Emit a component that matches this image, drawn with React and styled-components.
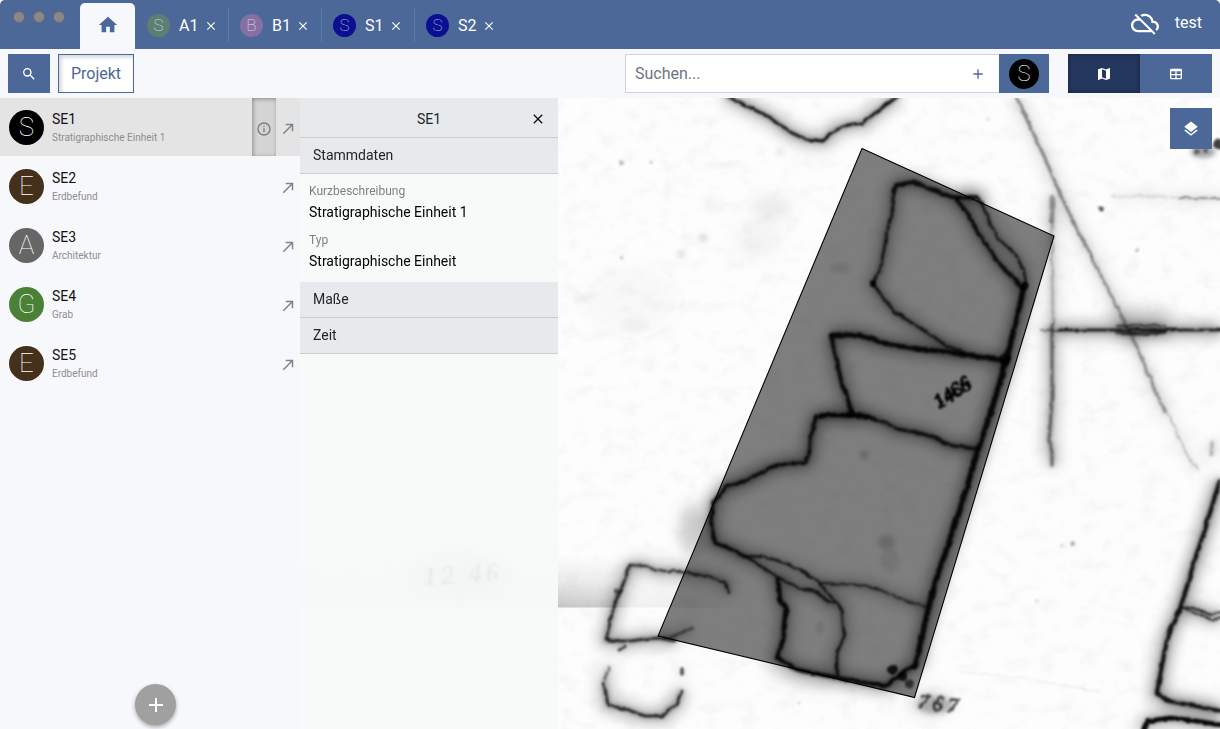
import React from "react";
import styled, { createGlobalStyle } from "styled-components";

const BLUE = "#4b6898";

const GlobalStyle = createGlobalStyle`
  *, *::before, *::after { box-sizing: border-box; }
  html, body, #root { height: 100%; }
  body {
    margin: 0;
    background: #f7f8fb;
    font-family: Roboto, "Liberation Sans", sans-serif;
    color: #212529;
    overflow: hidden;
  }
  button { font: inherit; border: 0; padding: 0; margin: 0; background: none; color: inherit; }
`;

const icons = {
  home: "M10,20V14H14V20H19V12H22L12,3L2,12H5V20H10Z",
  magnify:
    "M9.5,3A6.5,6.5 0 0,1 16,9.5C16,11.11 15.41,12.59 14.44,13.73L14.71,14H15.5L20.5,19L19,20.5L14,15.5V14.71L13.73,14.44C12.59,15.41 11.11,16 9.5,16A6.5,6.5 0 0,1 3,9.5A6.5,6.5 0 0,1 9.5,3M9.5,5C7,5 5,7 5,9.5C5,12 7,14 9.5,14C12,14 14,12 14,9.5C14,7 12,5 9.5,5Z",
  map: "M15,19L9,16.89V5L15,7.11M20.5,3C20.44,3 20.39,3 20.34,3L15,5.1L9,3L3.36,4.9C3.15,4.97 3,5.15 3,5.38V20.5A0.5,0.5 0 0,0 3.5,21C3.55,21 3.61,21 3.66,20.97L9,18.9L15,21L20.64,19.1C20.85,19 21,18.85 21,18.62V3.5A0.5,0.5 0 0,0 20.5,3Z",
  table:
    "M5,4H19A2,2 0 0,1 21,6V18A2,2 0 0,1 19,20H5A2,2 0 0,1 3,18V6A2,2 0 0,1 5,4M5,8V12H11V8H5M13,8V12H19V8H13M5,14V18H11V14H5M13,14V18H19V14H13Z",
  layers:
    "M12,16L19.36,10.27L21,9L12,2L3,9L4.63,10.27M12,18.54L4.62,12.81L3,14.07L12,21.07L21,14.07L19.37,12.8L12,18.54Z",
  plus: "M19,13H13V19H11V13H5V11H11V5H13V11H19V13Z",
  close:
    "M19,6.41L17.59,5L12,10.59L6.41,5L5,6.41L10.59,12L5,17.59L6.41,19L12,13.41L17.59,19L19,17.59L13.41,12L19,6.41Z",
  info: "M11,9H13V7H11M12,20C7.59,20 4,16.41 4,12C4,7.59 7.59,4 12,4C16.41,4 20,7.59 20,12C20,16.41 16.41,20 12,20M12,2A10,10 0 0,0 2,12A10,10 0 0,0 12,22A10,10 0 0,0 22,12A10,10 0 0,0 12,2M11,17H13V11H11V17Z",
  arrow: "M5,17.59L15.59,7H9V5H19V15H17V8.41L6.41,19L5,17.59Z",
  cloudOff:
    "M19.35 10.04A7.49 7.49 0 0 0 12 4c-1.48 0-2.85.43-4.01 1.17l1.46 1.46A5.497 5.497 0 0 1 17.5 11.5v.5H19a2.996 2.996 0 0 1 1.79 5.4l1.41 1.41C23.16 17.97 24 16.68 24 15c0-2.64-2.05-4.78-4.65-4.96zM3 5.27l2.75 2.74C2.56 8.15 0 10.77 0 14c0 3.31 2.69 6 6 6h11.73l2 2L21 20.73 4.27 4 3 5.27zM7.73 10l8 8H6c-2.21 0-4-1.79-4-4s1.79-4 4-4h1.73z",
};

const Glyph = styled.svg`
  display: block;
  flex: none;
  fill: currentColor;
`;
const Icon = ({ name, size }) => (
  <Glyph width={size} height={size} viewBox="0 0 24 24">
    <path d={icons[name]} />
  </Glyph>
);

const Window = styled.div`
  width: 1220px;
  height: 729px;
  display: flex;
  flex-direction: column;
`;

const TitleBar = styled.header`
  height: 49px;
  flex: none;
  display: flex;
  align-items: flex-start;
  background: ${BLUE};
  border-top-left-radius: 5px;
  border-top-right-radius: 5px;
  color: #fff;
`;
const WindowControls = styled.div`
  width: 80px;
  display: flex;
  gap: 8px;
  padding: 11px 0 0 13px;
`;
const ControlDot = styled.span`
  width: 12px;
  height: 12px;
  border-radius: 50%;
  background: #8a8889;
  border: 1px solid #6a6a6f;
`;
const HomeTab = styled.div`
  width: 55px;
  height: 46px;
  margin-top: 3px;
  border-radius: 5px 5px 0 0;
  background: #f7f8fb;
  color: ${BLUE};
  display: flex;
  justify-content: center;
  padding: 11px 0 0 0;
`;
const Tab = styled.div`
  width: 93px;
  height: 34px;
  margin-top: 8px;
  padding-left: ${(p) => (p.$first ? 12 : 11)}px;
  ${(p) => p.$first && "width: 94px;"}
  border-right: 1px solid ${(p) => (p.$last ? "transparent" : "#5f7bab")};
  display: flex;
  align-items: center;
  font-size: 16px;
`;
const TabLabel = styled.span`
  margin: 0 5.5px 0 9px;
  padding-top: 2px;
  line-height: 24px;
`;
const TabClose = styled.span`
  padding-top: 2px;
`;
const Account = styled.div`
  margin-left: auto;
  display: flex;
  align-items: center;
  gap: 16px;
  padding: 9px 18px 0 0;
  font-size: 16px;
  line-height: 24px;
`;

const Avatar = styled.span`
  flex: none;
  width: ${(p) => p.$size}px;
  height: ${(p) => p.$size}px;
  border-radius: 50%;
  background: ${(p) => p.$color};
  color: ${(p) => p.$ink || "#fff"};
  display: flex;
  align-items: center;
  justify-content: center;
  font-weight: 100;
  font-size: ${(p) => p.$font}px;
  line-height: 1;
`;

const Toolbar = styled.div`
  height: 49px;
  flex: none;
  display: flex;
  align-items: center;
  padding: 0 8px;
`;
const ToolButton = styled.button`
  width: ${(p) => p.$width}px;
  height: 39px;
  display: flex;
  align-items: center;
  justify-content: center;
  color: #fff;
  background: ${(p) => (p.$active ? "#25375f" : BLUE)};
  ${(p) => p.$active && "box-shadow: inset 0 0 5px rgba(0, 0, 0, 0.35);"}
`;
const ProjectButton = styled.button`
  width: 76px;
  height: 39px;
  margin-left: 8px;
  border: 1px solid ${BLUE};
  background: #fff;
  color: ${BLUE};
  font-size: 16px;
  box-shadow: inset 2px 2px 4px rgba(0, 0, 0, 0.18);
`;
const SearchBox = styled.div`
  width: 374px;
  height: 39px;
  margin-left: auto;
  padding: 0 13px 0 9px;
  border: 1px solid #ced4da;
  border-right: 0;
  background: #fff;
  color: #6c757d;
  font-size: 16px;
  display: flex;
  align-items: center;
  justify-content: space-between;
`;
const AddFilter = styled.span`
  color: ${BLUE};
`;
const ViewSwitch = styled.div`
  display: flex;
  margin-left: 19px;
`;

const Body = styled.main`
  flex: 1;
  min-height: 0;
  display: flex;
`;
const Sidebar = styled.aside`
  width: 300px;
  display: flex;
  flex-direction: column;
  align-items: center;
  justify-content: space-between;
  padding-bottom: 4px;
`;
const ResourceList = styled.div`
  width: 100%;
  display: flex;
  flex-direction: column;
  gap: 1px;
`;
const ResourceRow = styled.div`
  height: 58px;
  padding-left: 9px;
  display: flex;
  align-items: center;
  background: ${(p) => (p.$selected ? "#e4e4e4" : "transparent")};
`;
const ResourceText = styled.div`
  flex: 1;
  margin-left: 8px;
`;
const ResourceName = styled.div`
  font-size: 14px;
  line-height: 18px;
  color: #111;
`;
const ResourceDescription = styled.div`
  margin-top: 2px;
  font-size: 10px;
  line-height: 15px;
  color: #8e8e8e;
`;
const InfoButton = styled.button`
  width: 24px;
  height: 58px;
  padding-top: 4px;
  display: flex;
  align-items: center;
  justify-content: center;
  color: #75797d;
  background: #d4d4d4;
  box-shadow: inset 1px 1px 4px rgba(0, 0, 0, 0.35);
`;
const OpenButton = styled.button`
  width: 24px;
  padding-top: 4px;
  display: flex;
  justify-content: center;
  color: #7c858d;
`;
const CreateButton = styled.button`
  width: 41px;
  height: 41px;
  margin-left: 11px;
  border-radius: 50%;
  background: #a0a0a0;
  color: #fff;
  display: flex;
  align-items: center;
  justify-content: center;
  box-shadow: 0 2px 4px rgba(0, 0, 0, 0.35);
`;

const MapArea = styled.section`
  position: relative;
  width: 920px;
  display: flex;
  justify-content: space-between;
  align-items: flex-start;
  background: #fdfdfd;
`;
const MapDrawing = styled.svg`
  position: absolute;
  inset: 0;
  width: 920px;
  height: 631px;
`;
const DetailPanel = styled.div`
  position: relative;
  width: 258px;
  height: 631px;
  background: rgba(247, 250, 249, 0.9);
`;
const DetailHeader = styled.div`
  height: 40px;
  display: flex;
  align-items: center;
  padding-top: 3px;
  background: #e6eaed;
  border-bottom: 1px solid #c9ced2;
  font-size: 14px;
`;
const DetailTitle = styled.span`
  flex: 1;
  padding-left: 41px;
  text-align: center;
`;
const DetailClose = styled.button`
  width: 41px;
  display: flex;
  justify-content: center;
  color: #111;
`;
const SectionHeader = styled.div`
  height: 36px;
  padding: 0 13px;
  background: #e6eaed;
  border-bottom: 1px solid #c9ced2;
  font-size: 14px;
  line-height: 35px;
`;
const Fields = styled.dl`
  margin: 0;
  height: 108px;
  padding: 8px 9px 0;
`;
const FieldName = styled.dt`
  font-size: 12px;
  line-height: 18px;
  color: #808080;
`;
const FieldValue = styled.dd`
  margin: 0 0 8px;
  padding-top: 2px;
  font-size: 14px;
  line-height: 21px;
  color: #000;
`;
const LayerButton = styled(ToolButton)`
  position: relative;
  width: 42px;
  height: 41px;
  margin: 10px 8px 0 0;
`;

const tabs = [
  { letter: "S", name: "A1", color: "#5b8073", ink: "#dde8e4" },
  { letter: "B", name: "B1", color: "#8670a3", ink: "#e2d8ee" },
  { letter: "S", name: "S1", color: "#0a108f", ink: "#c6c9f0" },
  { letter: "S", name: "S2", color: "#0a108f", ink: "#c6c9f0" },
];
const resources = [
  { letter: "S", name: "SE1", description: "Stratigraphische Einheit 1", color: "#000" },
  { letter: "E", name: "SE2", description: "Erdbefund", color: "#45301b" },
  { letter: "A", name: "SE3", description: "Architektur", color: "#666" },
  { letter: "G", name: "SE4", description: "Grab", color: "#4b8136" },
  { letter: "E", name: "SE5", description: "Erdbefund", color: "#45301b" },
];

/* Pencil lines of the scanned plan: points, line width, darkness, halo strength */
const strokes = [
  ["725,95 745,105 771,118 788,131 805,139 823,141 835,130 848,125 863,123 875,113 898,96", 2.9, 0.85, 0.34],
  ["893,192 897,185 913,182 933,190 952,197 977,198 982,204", 3.6, 0.85, 0.42],
  ["893,192 892,215 887,231 884,250 880,270 873,283 883,298 895,312 923,330 947,346 965,353", 2.4, 0.8, 0.34],
  ["957,200 968,214 977,231 997,261 1010,275 1022,288", 3.5, 0.85, 0.4],
  ["982,204 990,224 1000,240 1017,256 1024,272 1026,283", 2.2, 0.8, 0.25],
  ["1024,285 1020,305 1015,325 1007,358 990,415 978,450 961,507 936,580 928,610 915,667", 5, 0.88, 0.52],
  ["831,335 858,335 891,345 920,349 947,352 973,356 1007,361", 4.4, 0.88, 0.48],
  ["831,336 836,357 841,381 847,397 852,413", 4, 0.85, 0.4],
  ["815,417 834,415 848,416 862,415 876,419 898,429 920,433 935,438 948,445 977,449", 2.9, 0.82, 0.44],
  ["816,417 811,437 810,449 806,462 790,463 772,467 745,481 726,487 713,503 711,523 715,543 731,549 745,557", 3, 0.88, 0.48],
  ["822,415 850,415 869,417", 4, 0.8, 0.2],
  ["745,556 771,573 798,588 818,592 828,602 837,603 842,610 844,637 837,653 837,675", 2.5, 0.8, 0.28],
  ["745,556 765,557 785,563 818,580 825,590 837,603", 2.4, 0.8, 0.2],
  ["822,583 858,585 880,590 898,598 927,607", 1.8, 0.65, 0.24],
  ["778,577 780,600 786,608 784,625 783,640 777,658 798,670 838,678 862,682 885,686 896,678 904,672 914,666", 4, 0.88, 0.44],
  ["630,565 645,566 658,571 672,571 688,573 708,576 725,582 729,593", 2.2, 0.75, 0.3],
  ["630,565 624,582 618,595 612,614 606,640 620,641 631,641 645,639 658,638 675,641", 2.4, 0.8, 0.34],
  ["670,637 681,633 693,628", 2.2, 0.5, 0.15],
  ["624,647 619,650", 3, 0.65, 0.15],
  ["609,667 604,683", 2, 0.45, 0.2],
  ["604,683 608,705 625,709 645,716 663,716 669,709 676,705 682,690", 2.5, 0.8, 0.34],
  ["682,669 682,674", 3.5, 0.65, 0.15],
  ["1220,480 1206,526 1193,566 1180,609 1168,635 1163,660 1157,693 1168,701 1190,705 1221,711", 3.8, 0.85, 0.46],
  ["1180,608 1195,608 1208,614 1221,613", 2, 0.75, 0.2],
  ["1186,610 1199,614 1212,620 1221,618", 2, 0.75, 0.2],
  ["1143,731 1148,721 1170,718 1190,720 1221,725", 4.5, 0.95, 0.35],
  ["1058,330 1117,330 1166,330 1221,330", 2.6, 0.82, 0.38],
  ["1042,330 1058,330", 2, 0.4, 0.15],
  ["1117,326 1140,325 1165,326", 2.2, 0.6, 0.2],
  ["1117,333 1140,334 1165,332", 3, 0.65, 0.25],
  ["1052,197 1052,222", 4.5, 0.28, 0.2],
  ["1052,222 1052,270 1053,325", 2, 0.22, 0.14],
  ["1052,325 1052,400 1050,430 1049,440 1052,452 1052,466", 3, 0.42, 0.28],
  ["1016,96 1030,126 1045,158 1061,196 1080,235 1092,257", 3, 0.38, 0.12],
  ["1092,257 1108,289 1125,323 1137,348 1165,412", 2.8, 0.32, 0.12],
  ["1165,408 1176,430 1187,455 1198,470", 2, 0.18, 0.05],
  ["1112,196 1160,196 1180,198", 1.2, 0.18, 0.04],
  ["1180,198 1221,198", 1.8, 0.38, 0.08],
  ["961,672 1020,678 1100,692", 1.2, 0.08, 0],
  ["1212,442 1212,455", 3, 0.2, 0.12],
];
const spots = [
  [893, 670, 5, 0.85], [903, 676, 4, 0.8], [909, 684, 5, 0.6], [1101, 209, 2.8, 0.6], [1137, 250, 2.2, 0.22],
  [1073, 544, 2.4, 0.32], [1062, 545, 2, 0.12], [622, 163, 2.3, 0.22], [651, 162, 2, 0.16],
  [621, 258, 2.2, 0.22], [1037, 601, 2.2, 0.1], [988, 119, 2.2, 0.08], [800, 703, 2, 0.1],
  [1218, 144, 5, 0.75], [1197, 152, 3, 0.4], [1205, 150, 3, 0.4],
  [1025, 286, 4, 0.8], [1005, 359, 6, 0.85], [873, 283, 3, 0.85], [850, 413, 4, 0.8],
  [617, 591, 3, 0.5],
];
const smudges = [
  [864, 455, 4, 5, 0.17], [886, 542, 9, 7, 0.15], [820, 628, 2, 7, 0.18], [703, 238, 5, 4, 0.13],
  [681, 254, 5, 4, 0.1], [715, 205, 12, 9, 0.02], [1203, 152, 12, 6, 0.35], [780, 152, 4, 4, 0.08],
  [635, 325, 14, 8, 0.03], [580, 299, 8, 4, 0.05], [722, 165, 18, 2, 0.06], [840, 268, 10, 5, 0.09],
  [890, 560, 10, 12, 0.07], [935, 705, 18, 9, 0.22], [668, 187, 3, 10, 0.03],
];

const ScannedMap = () => (
  <MapDrawing viewBox="300 98 920 631">
    <defs>
      <filter id="rough" filterUnits="userSpaceOnUse" x="300" y="90" width="930" height="650">
        <feTurbulence type="fractalNoise" baseFrequency="0.12" numOctaves="2" seed="4" />
        <feDisplacementMap in="SourceGraphic" scale="4" xChannelSelector="R" yChannelSelector="G" />
        <feGaussianBlur stdDeviation="0.9" />
      </filter>
      <filter id="halo" filterUnits="userSpaceOnUse" x="300" y="90" width="930" height="650">
        <feGaussianBlur stdDeviation="7" />
      </filter>
      <filter id="near" filterUnits="userSpaceOnUse" x="300" y="90" width="930" height="650">
        <feGaussianBlur stdDeviation="2.8" />
      </filter>
      <filter id="grain" filterUnits="userSpaceOnUse" x="300" y="98" width="920" height="631">
        <feTurbulence type="fractalNoise" baseFrequency="0.05 0.07" numOctaves="4" seed="9" />
        <feColorMatrix values="0 0 0 0 0.3  0 0 0 0 0.3  0 0 0 0 0.3  1.1 0 0 0 -0.55" />
      </filter>
      <linearGradient id="fold" x1="0" y1="0" x2="0" y2="1">
        <stop offset="0" stopColor="#777" stopOpacity="0" />
        <stop offset="0.5" stopColor="#777" stopOpacity="0.14" />
        <stop offset="1" stopColor="#777" stopOpacity="0.42" />
      </linearGradient>
      <linearGradient id="panelFold" x1="0" y1="0" x2="0" y2="1">
        <stop offset="0" stopColor="#888" stopOpacity="0" />
        <stop offset="1" stopColor="#888" stopOpacity="0.15" />
      </linearGradient>
      <linearGradient id="foldEnd" x1="0" y1="0" x2="1" y2="0">
        <stop offset="0" stopColor="#fff" stopOpacity="1" />
        <stop offset="0.28" stopColor="#fff" stopOpacity="0.8" />
        <stop offset="0.4" stopColor="#fff" stopOpacity="0.2" />
        <stop offset="0.75" stopColor="#fff" stopOpacity="0.3" />
        <stop offset="1" stopColor="#fff" stopOpacity="0" />
      </linearGradient>
      <mask id="foldMask">
        <rect x="558" y="550" width="182" height="60" fill="url(#foldEnd)" />
      </mask>
    </defs>
    <rect x="300" y="98" width="920" height="631" fill="#fdfdfd" />
    <rect x="300" y="98" width="920" height="631" filter="url(#grain)" opacity="0.17" />
    <g filter="url(#halo)" fill="#777">
      <ellipse cx="772" cy="208" rx="20" ry="13" opacity="0.12" />
      <ellipse cx="758" cy="240" rx="25" ry="17" opacity="0.07" />
      <ellipse cx="630" cy="300" rx="45" ry="34" opacity="0.04" />
      <ellipse cx="1140" cy="315" rx="36" ry="9" opacity="0.26" />
      <ellipse cx="692" cy="530" rx="12" ry="26" opacity="0.36" />
      <ellipse cx="460" cy="575" rx="50" ry="24" opacity="0.25" />
      <ellipse cx="930" cy="703" rx="22" ry="12" opacity="0.25" />
      <ellipse cx="972" cy="195" rx="14" ry="6" opacity="0.4" />
      <ellipse cx="800" cy="680" rx="34" ry="6" opacity="0.2" transform="rotate(13 800 680)" />
    </g>
    <g filter="url(#near)">
      {smudges.map(([x, y, rx, ry, dark]) => (
        <ellipse key={`${x}-${y}`} cx={x} cy={y} rx={rx} ry={ry} fillOpacity={dark} />
      ))}
    </g>
    <rect x="558" y="555" width="182" height="52.5" fill="url(#fold)" mask="url(#foldMask)" />
    <rect x="300" y="555" width="258" height="52.5" fill="url(#panelFold)" />
    <g filter="url(#halo)" fill="none" stroke="#000" strokeWidth="15">
      {strokes.map(([points, , , halo]) => (
        <polyline key={points} points={points} strokeOpacity={halo * 0.75} />
      ))}
    </g>
    <g filter="url(#near)" fill="none" stroke="#000" strokeWidth="5">
      {strokes.map(([points, , , halo]) => (
        <polyline key={points} points={points} strokeOpacity={halo} />
      ))}
    </g>
    <g filter="url(#rough)" fill="none" stroke="#000" strokeLinejoin="round" strokeLinecap="round">
      {strokes.map(([points, width, dark]) => (
        <polyline key={points} points={points} strokeWidth={width} strokeOpacity={dark} />
      ))}
    </g>
    <g filter="url(#rough)">
      {spots.map(([x, y, r, dark]) => (
        <circle key={`${x}-${y}`} cx={x} cy={y} r={r} fillOpacity={dark} />
      ))}
    </g>
    <g filter="url(#rough)" fontFamily="Liberation Serif, serif" fontStyle="italic" stroke="#000">
      <text x="0" y="0" transform="translate(939 409) rotate(-33)" fontSize="20" strokeWidth="1.6" textLength="40">
        1466
      </text>
      <text x="917" y="708" fontSize="22" strokeWidth="1" opacity="0.75" textLength="40" transform="rotate(8 918 711)">
        767
      </text>
      <text x="424" y="585" fontSize="26" strokeWidth="0.4" opacity="0.6" textLength="75" transform="rotate(-4 428 584)">
        12 46
      </text>
    </g>
    <polygon points="862,148.5 1054,236 914.5,697.5 658,636" fill="#000" fillOpacity="0.5" stroke="#000" strokeWidth="1.1" />
  </MapDrawing>
);

export default function App() {
  return (
    <Window>
      <GlobalStyle />
      <TitleBar>
        <WindowControls>
          <ControlDot />
          <ControlDot />
          <ControlDot />
        </WindowControls>
        <HomeTab>
          <Icon name="home" size={22} />
        </HomeTab>
        {tabs.map((tab, i) => (
          <Tab key={tab.name} $first={i === 0} $last={i === tabs.length - 1}>
            <Avatar $size={23} $font={17} $color={tab.color} $ink={tab.ink}>
              {tab.letter}
            </Avatar>
            <TabLabel>{tab.name}</TabLabel>
            <TabClose>
              <Icon name="close" size={14} />
            </TabClose>
          </Tab>
        ))}
        <Account>
          <Icon name="cloudOff" size={28} />
          <span>test</span>
        </Account>
      </TitleBar>
      <Toolbar>
        <ToolButton $width={42}>
          <Icon name="magnify" size={16} />
        </ToolButton>
        <ProjectButton>Projekt</ProjectButton>
        <SearchBox>
          <span>Suchen...</span>
          <AddFilter>
            <Icon name="plus" size={16} />
          </AddFilter>
        </SearchBox>
        <ToolButton $width={50}>
          <Avatar $size={30} $font={22} $color="#000">
            S
          </Avatar>
        </ToolButton>
        <ViewSwitch>
          <ToolButton $width={72} $active>
            <Icon name="map" size={16} />
          </ToolButton>
          <ToolButton $width={72}>
            <Icon name="table" size={16} />
          </ToolButton>
        </ViewSwitch>
      </Toolbar>
      <Body>
        <Sidebar>
          <ResourceList>
            {resources.map((resource, i) => (
              <ResourceRow key={resource.name} $selected={i === 0}>
                <Avatar $size={35} $font={26} $color={resource.color}>
                  {resource.letter}
                </Avatar>
                <ResourceText>
                  <ResourceName>{resource.name}</ResourceName>
                  <ResourceDescription>{resource.description}</ResourceDescription>
                </ResourceText>
                {i === 0 && (
                  <InfoButton>
                    <Icon name="info" size={16} />
                  </InfoButton>
                )}
                <OpenButton>
                  <Icon name="arrow" size={18} />
                </OpenButton>
              </ResourceRow>
            ))}
          </ResourceList>
          <CreateButton>
            <Icon name="plus" size={24} />
          </CreateButton>
        </Sidebar>
        <MapArea>
          <ScannedMap />
          <DetailPanel>
            <DetailHeader>
              <DetailTitle>SE1</DetailTitle>
              <DetailClose>
                <Icon name="close" size={16} />
              </DetailClose>
            </DetailHeader>
            <SectionHeader>Stammdaten</SectionHeader>
            <Fields>
              <FieldName>Kurzbeschreibung</FieldName>
              <FieldValue>Stratigraphische Einheit 1</FieldValue>
              <FieldName>Typ</FieldName>
              <FieldValue>Stratigraphische Einheit</FieldValue>
            </Fields>
            <SectionHeader>Maße</SectionHeader>
            <SectionHeader>Zeit</SectionHeader>
          </DetailPanel>
          <LayerButton>
            <Icon name="layers" size={18} />
          </LayerButton>
        </MapArea>
      </Body>
    </Window>
  );
}
